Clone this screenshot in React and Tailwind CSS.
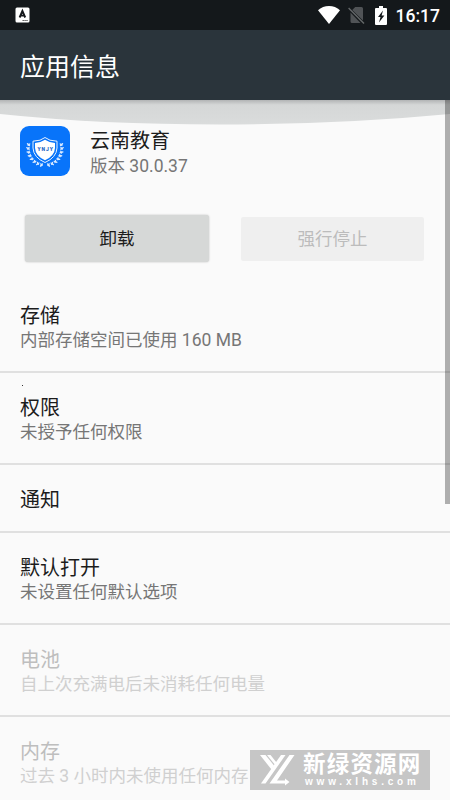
const rows = [
  { title: "存储", sub: "内部存储空间已使用 160 MB" },
  { title: "权限", sub: "未授予任何权限", dot: true },
  { title: "通知" },
  { title: "默认打开", sub: "未设置任何默认选项" },
  { title: "电池", sub: "自上次充满电后未消耗任何电量", disabled: true },
  { title: "内存", sub: "过去 3 小时内未使用任何内存", disabled: true },
];

function StatusBar() {
  return (
    <div className="flex h-[30px] shrink-0 items-center bg-[#14181b] pr-[10px] pl-[15px] text-white">
      <svg width="15" height="16" viewBox="0 0 15 16">
        <rect x="0.5" y="0.5" width="14" height="15" rx="1.5" fill="#fff" />
        <path d="M4.600 10.500 7.400 4l2.800 6.500M5.600 8.600h3.800" fill="none" stroke="#14181b" strokeWidth="1.9" />
        <path d="M7.5 13.5h5.5" stroke="#555" strokeWidth="1" strokeDasharray="1.4 .5" />
      </svg>
      <svg className="ml-auto" width="22" height="18" viewBox="0 0 22 18">
        <path d="M0 4.2C3 1.5 6.8 0 11 0s8 1.500 11 4.200L11 18Z" fill="#fff" />
      </svg>
      <svg className="ml-[8px]" width="17" height="18" viewBox="0 0 17 18">
        <path d="M4.200 4 7.200 1H13.500Q15 1 15 2.500V14.500ZM2.500 6.500 12.500 17H4Q2.500 17 2.500 15.500Z" fill="#505356" />
        <path d="M.6 2 16 17.500" stroke="#65686a" strokeWidth="1.4" />
      </svg>
      <svg className="ml-[10px]" width="12" height="19" viewBox="0 0 12 19">
        <path d="M4 0h4v2h3q1 0 1 1v15q0 1-1 1H1q-1 0-1-1V3q0-1 1-1h3Z" fill="#fff" />
        <path d="M8 4.500 3 11h2.500L4 16.500 9.400 9.500H6.600Z" fill="#14181b" />
      </svg>
      <span className="ml-[9px] pt-px text-[17.5px] leading-[30px] font-medium">16:17</span>
    </div>
  );
}

function AppIcon() {
  const leaves = [0, 1, 2, 3, 4, 5, 6, 7];
  const half = leaves.map((i) => {
    const a = ((188 - i * 13) * Math.PI) / 180;
    const x = 25 + Math.cos(a) * 16.5;
    const y = 22.5 + Math.sin(a) * 16.5;
    return (
      <g key={i} transform={`translate(${x} ${y}) rotate(${8 - i * 13})`}>
        <ellipse cx="-1.200" cy="-1" rx="2.200" ry=".8" transform="rotate(35)" fill="#dcebff" />
        <ellipse cx="1.200" cy="-1" rx="1.800" ry=".7" transform="rotate(-48)" fill="#dcebff" />
      </g>
    );
  });
  return (
    <svg className="shrink-0" width="50" height="50" viewBox="0 0 50 50">
      <rect width="50" height="50" rx="9" fill="#0874fa" />
      {half}
      <g transform="translate(50 0) scale(-1 1)">{half}</g>
      <path d="M25 11.500Q29 15 37 15.200V22Q36.500 31.500 25 36.500 13.500 31.500 13 22V15.200Q21 15 25 11.500Z" fill="#0874fa" stroke="#e8f2ff" strokeWidth="1" />
      <path d="M25 13.800Q29.500 16.800 35 17V22Q34.500 30 25 34.300 15.500 30 15 22V17Q20.500 16.800 25 13.800Z" fill="#fff" />
      <text x="17.500" y="25.300" textLength="15.500" fontSize="5" fontWeight="900" fontFamily="Roboto, sans-serif" fill="#1f66c4">YNJY</text>
    </svg>
  );
}

function Row({ title, sub, disabled, dot }) {
  return (
    <div className="relative border-b-2 border-[#e0e0e0] pt-[22px] pb-[19px] pl-5">
      {dot && <i className="absolute top-[12px] left-[22px] size-px bg-[#333]" />}
      <div className={`text-[20px] leading-[26px] ${disabled ? "text-[#bebebe]" : "text-[#1c1c1c]"}`}>{title}</div>
      {sub && (
        <div className={`-mt-px text-[17.5px] leading-6 whitespace-nowrap ${disabled ? "text-[#d0d0d0]" : "text-[#767676]"}`}>{sub}</div>
      )}
      {!sub && <div className="-mt-px" />}
    </div>
  );
}

function Watermark() {
  return (
    <div className="absolute top-[750px] left-[250px] flex h-10 w-[180px] bg-[#c6c6c6] text-white">
      <svg className="shrink-0" width="50" height="40" viewBox="0 0 50 40">
        <path d="M10 5H15.500L24 15.500 21.500 19.500Z" fill="#fff" />
        <path d="M17 5H20.500L26.500 12.500 25 14.800Z" fill="#fff" />
        <path d="M31 5H35.500L15.500 33.500H11Z" fill="#fff" />
        <path d="M39.500 5H44.500L27 30.500H35V28.500L39.500 32 35 35.500V33.500H19.500Z" fill="#fff" />
      </svg>
      <div className="flex flex-col pl-[3px]">
        <span className="mt-[2px] text-[22.5px] leading-6 font-bold tracking-[1.2px] whitespace-nowrap">新绿资源网</span>
        <span className="mt-px pl-[2px] font-['Liberation_Sans'] text-[10px] leading-[10px] font-bold tracking-[3.8px] whitespace-nowrap">www.xlhs.com</span>
      </div>
    </div>
  );
}

export default function App() {
  return (
    <div className="relative flex h-[800px] w-[450px] flex-col overflow-hidden bg-[#fafafa] font-[Roboto,'Noto_Sans_CJK_SC',sans-serif]">
      <StatusBar />
      <header className="flex h-[70px] shrink-0 items-center bg-[#2a343b] pt-[5px] pl-5 text-[25px] text-white">应用信息</header>
      <main className="relative h-[700px]">
        <svg className="absolute top-0 left-0" width="450" height="25" viewBox="0 0 450 25">
          <defs>
            <linearGradient id="shade" x1="0" y1="0" x2="0" y2="1">
              <stop offset="0" stopColor="#b2b4b5" />
              <stop offset=".2" stopColor="#d5d7d7" />
              <stop offset="1" stopColor="#dadcdc" />
            </linearGradient>
          </defs>
          <path d="M0 0H450V14Q340 24.500 220 24.500T0 14Z" fill="url(#shade)" />
        </svg>
        <div className="relative flex gap-5 pt-[26px] pl-5">
          <AppIcon />
          <div className="pt-[2px]">
            <div className="text-[20px] leading-[26px] text-[#1c1c1c]">云南教育</div>
            <div className="h-[22px] text-[17.5px] leading-6 text-[#767676]">版本 30.0.37</div>
          </div>
        </div>
        <div className="mt-[39px] flex items-center gap-[32px] pl-[25px] text-[17.5px]">
          <button className="h-[47px] w-[184px] rounded-[3px] bg-[#d6d8d7] pt-[2px] text-[#1c1c1c] shadow-[0_0_2px_#bbb]">卸载</button>
          <button className="h-11 w-[183px] rounded-[2px] bg-[#efefef] pt-[2px] text-[#bcbcbc]">强行停止</button>
        </div>
        <div className="mt-[19px]">
          {rows.map((r) => (
            <Row key={r.title} {...r} />
          ))}
        </div>
        <div className="absolute top-0 right-0 h-[404px] w-[5px] bg-black/30" />
      </main>
      <Watermark />
    </div>
  );
}
